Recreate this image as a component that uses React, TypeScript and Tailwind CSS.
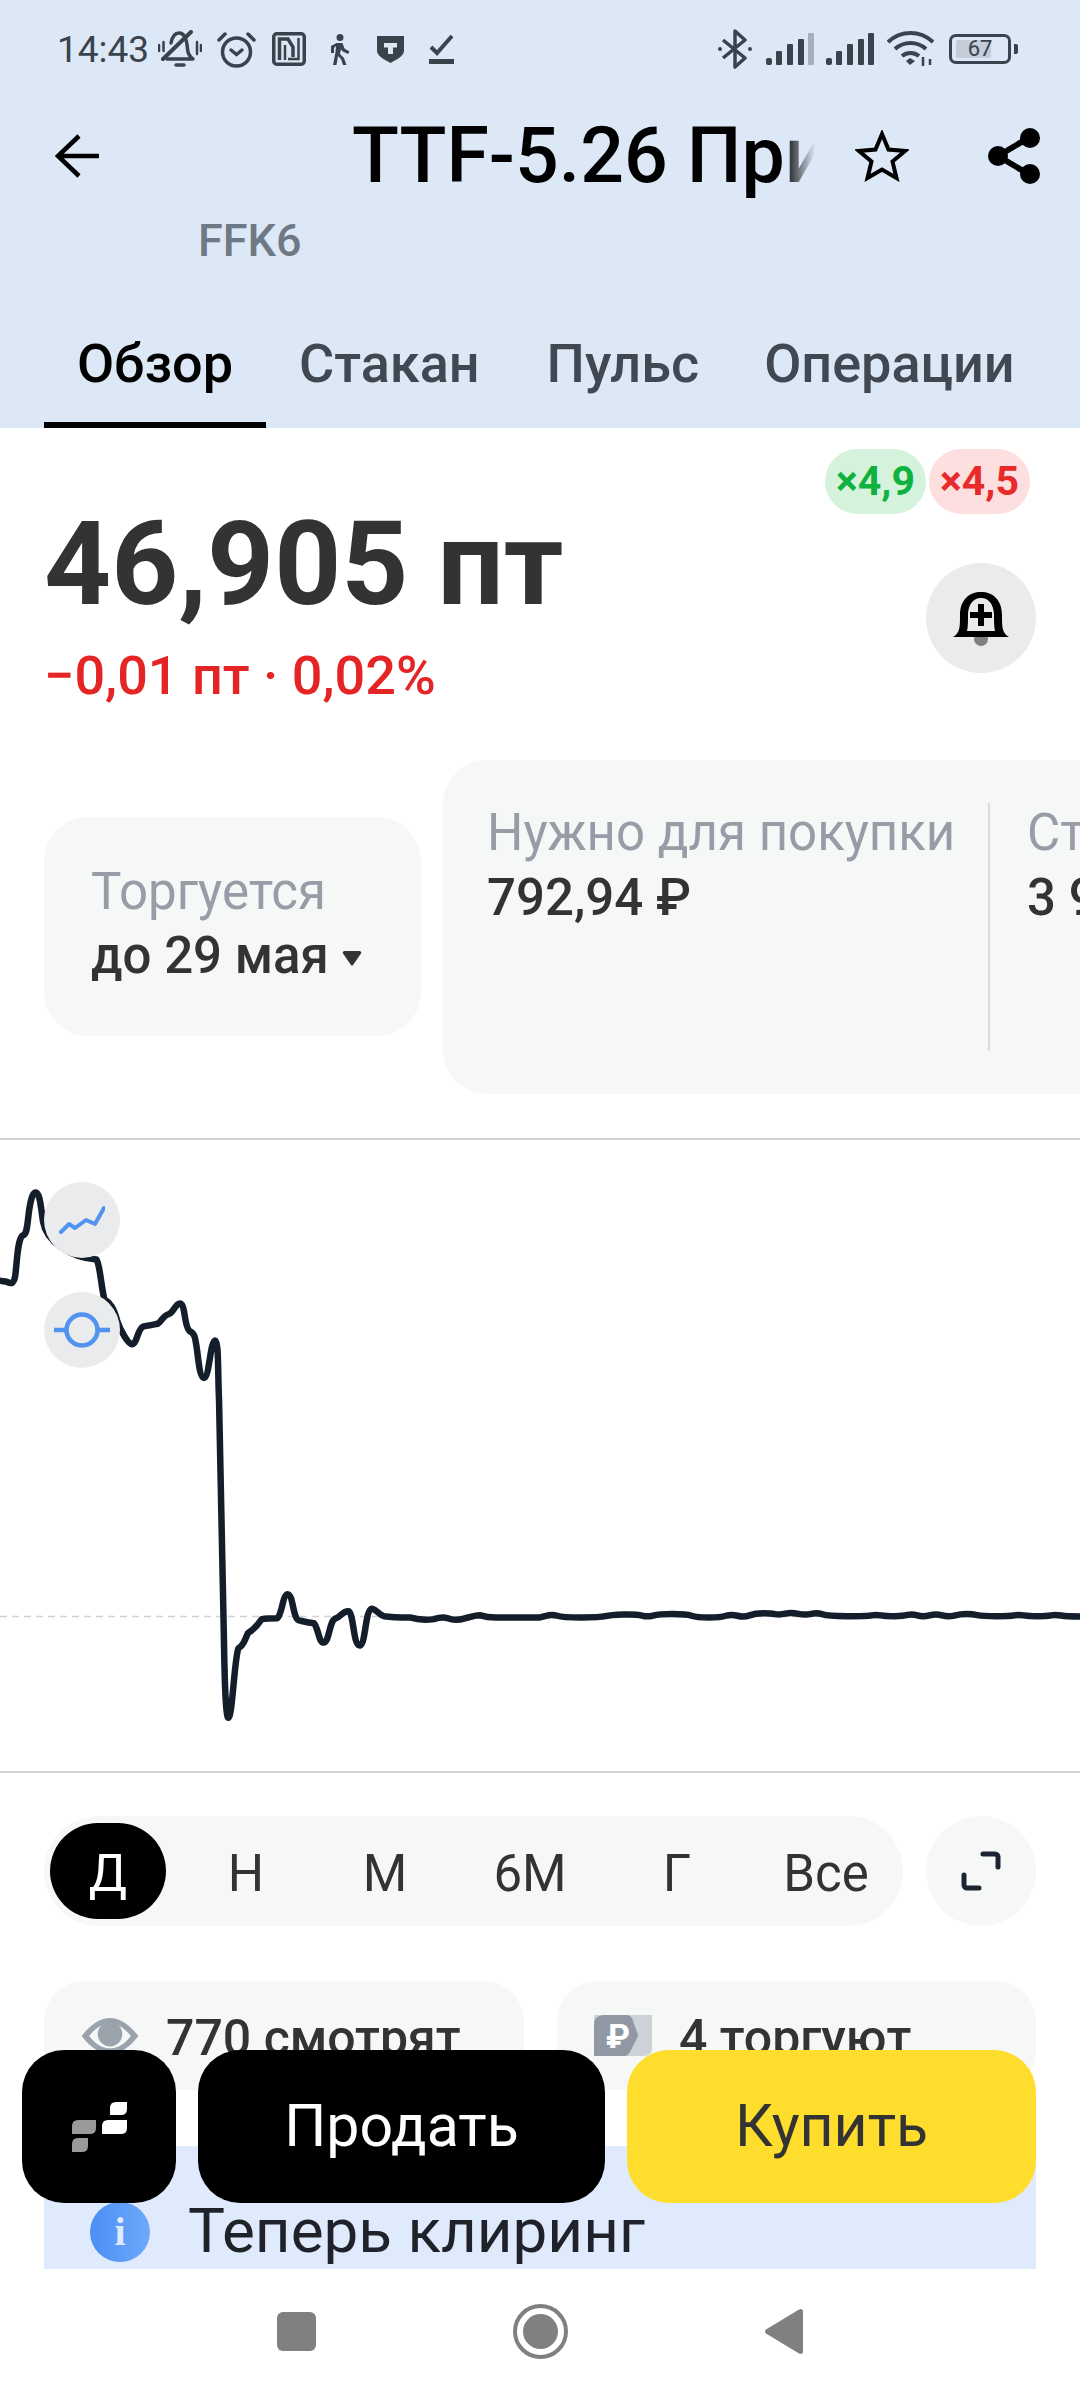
const flat: [number, number][] = [
  [1568, 1158], [1603, 1150], [1633, 1158], [1743, 1158], [1773, 1152], [1848, 1150], [1880, 1157], [1913, 1150],
  [1993, 1150], [2023, 1158], [2093, 1158], [2123, 1150], [2160, 1158], [2193, 1148], [2238, 1148], [2263, 1152],
  [2298, 1146], [2338, 1153], [2373, 1146], [2403, 1155], [2518, 1155], [2543, 1151], [2573, 1155], [2623, 1155],
  [2648, 1149], [2680, 1157], [2718, 1149], [2753, 1157], [2788, 1150], [2823, 1150], [2853, 1155], [2933, 1155],
  [2958, 1151], [2988, 1155], [3038, 1155], [3065, 1151], [3098, 1156], [3200, 1156], [3300, 1156],
];

function smooth(points: [number, number][]) {
  let d = "";
  for (let i = 0; i < points.length - 1; i++) {
    const [x, y] = points[i];
    const [nx, ny] = points[i + 1];
    d += ` Q ${x} ${y} ${(x + nx) / 2} ${(y + ny) / 2}`;
  }
  return d;
}

const chartLine =
  "M -5 355 L 20 358 C 35 365 40 360 44 345 C 50 310 50 260 65 248 C 80 245 78 225 85 185 C 92 150 98 145 104 145 " +
  "C 115 145 118 175 125 215 C 135 260 200 300 280 305 C 290 315 292 360 303 400 C 320 408 330 420 340 450 " +
  "C 350 475 372 507 384 507 C 398 505 400 470 415 465 C 430 462 445 460 458 458 C 472 450 475 437 490 435 " +
  "C 505 430 510 408 525 410 C 538 415 535 465 550 475 C 565 480 567 490 572 520 C 578 560 582 587 593 587 " +
  "C 608 585 610 500 625 498 C 635 500 632 560 636 640 C 640 800 645 1000 650 1200 C 652 1300 655 1397 663 1397 " +
  "C 675 1395 680 1260 692 1232 C 705 1225 710 1215 720 1195 C 735 1188 745 1180 760 1162 C 775 1160 790 1160 805 1160 " +
  "C 820 1150 820 1103 836 1103 C 852 1105 850 1160 868 1165 C 885 1168 895 1170 912 1172 C 925 1185 925 1218 940 1218 " +
  "C 958 1215 955 1165 975 1160 C 990 1157 995 1142 1012 1143 C 1028 1150 1025 1225 1045 1225 C 1062 1222 1060 1140 1080 1137 " +
  "C 1095 1140 1100 1152 1115 1155 C 1140 1158 1165 1158 1190 1158 C 1210 1163 1240 1164 1260 1162 C 1275 1158 1290 1157 1300 1160 " +
  "C 1315 1165 1335 1164 1350 1160 C 1365 1158 1380 1152 1395 1153 C 1410 1157 1420 1158 1440 1158 L 1568 1158" +
  smooth(flat);

const ranges = [
  { label: "Н", cls: "w-[160px]" },
  { label: "М", cls: "w-[118px]" },
  { label: "6М", cls: "w-[172px]" },
  { label: "Г", cls: "w-[122px]" },
  { label: "Все", cls: "w-[150px] ml-[13px]" },
];

function StatusIcons() {
  return (
    <div className="flex items-center text-[#3a424c]">
      {/* muted bell */}
      <svg width="44" height="38" viewBox="0 0 44 38" fill="none" stroke="currentColor" strokeWidth="3.500" strokeLinecap="round" className="ml-[9px]">
        <path d="M9 29h26c-3-2-5-5-5.500-10C29 12 27 3 21 3c-5 0-7 5-8 10" strokeLinejoin="round" />
        <path d="M5 29L33 2" strokeWidth="4" />
        <path d="M1 15v6M5.500 12v9M39 12v12M43 15v6" strokeWidth="2.500" />
        <path d="M18 35h8" strokeWidth="3.500" />
      </svg>
      {/* alarm */}
      <svg width="40" height="37" viewBox="0 0 40 37" fill="none" stroke="currentColor" strokeWidth="3.500" strokeLinecap="round" className="ml-[15px]">
        <circle cx="19.500" cy="21" r="14" />
        <path d="M2 9l6-6M37 9l-6-6" />
        <path d="M14 19l5.500 4.500L25 19" />
      </svg>
      {/* nfc */}
      <svg width="34" height="34" viewBox="0 0 34 34" fill="none" stroke="currentColor" strokeWidth="3.500" className="ml-[15px]">
        <rect x="1.750" y="1.750" width="30.500" height="30.500" rx="3" />
        <path d="M7.500 28V7h8.500l5 8v10" />
        <path d="M13 28V13M26.500 6v21H16" strokeWidth="2.500" />
      </svg>
      {/* walking */}
      <svg width="20" height="31" viewBox="0 0 20 31" fill="currentColor" className="ml-[24px]">
        <circle cx="10" cy="3.500" r="3.500" />
        <path d="M6.500 9h6l2 5.500 5 3-1.500 2.500-6-3-1-2-1 5 4 4 2.500 7h-3.500l-2-6-3-3-1.500 9H3l2.500-13 .5-6-2 2v5H1v-7z" />
      </svg>
      {/* shield */}
      <svg width="27" height="28" viewBox="0 0 27 28" className="ml-[27px]">
        <path d="M0 1h27v15c0 5-8 9-13.500 12C8 25 0 21 0 16z" fill="currentColor" />
        <path d="M7 8h13v4.500h-4v6.500h-5v-6.500H7z" fill="#dce8f6" />
      </svg>
      {/* task */}
      <svg width="25" height="30" viewBox="0 0 25 30" fill="none" stroke="currentColor" strokeWidth="4" className="ml-[25px]">
        <path d="M2 13l6 6L23 2" />
        <path d="M0 27.500h25" strokeWidth="5" />
      </svg>
    </div>
  );
}

function SignalIcon({ faded }: { faded?: boolean }) {
  return (
    <svg width="48" height="32" viewBox="0 0 48 32" fill="#3a424c">
      <rect x="0" y="25" width="6" height="7" rx="2" />
      <rect x="10" y="18" width="6" height="14" rx="1" />
      <rect x="21" y="11" width="6" height="21" rx="1" />
      <rect x="32" y="6" width="6" height="26" rx="1" />
      <rect x="42" y="0" width="6" height="32" rx="1" fill={faded ? "#a5aeb9" : "#3a424c"} />
    </svg>
  );
}

function StatusRight() {
  return (
    <div className="flex items-center text-[#3a424c]">
      <svg width="36" height="40" viewBox="0 0 36 40" fill="none" stroke="currentColor" strokeWidth="3.500" strokeLinejoin="round">
        <path d="M6 11l22 18-10 9V2l10 9L6 29" />
        <circle cx="3" cy="20" r="2" fill="currentColor" stroke="none" />
        <circle cx="33" cy="20" r="2" fill="currentColor" stroke="none" />
      </svg>
      <div className="ml-[13px]"><SignalIcon faded /></div>
      <div className="ml-[12px]"><SignalIcon /></div>
      <svg width="47" height="36" viewBox="0 0 47 36" fill="none" stroke="currentColor" strokeWidth="4" className="ml-[13px]">
        <path d="M1 11c13-12 32-12 45 0" />
        <path d="M8 18c9-8 22-8 31 0" />
        <path d="M15 25c5-4 12-4 17 0" />
        <path d="M19 30l4-3 5 3-5 4z" fill="currentColor" stroke="none" />
        <path d="M36 26v9M43 28v6" strokeWidth="2.500" />
      </svg>
      <div className="ml-[15px] flex items-center">
        <div className="relative w-[62px] h-[30px] rounded-[7px] border-[3px] border-[#3a424c] text-[22px] leading-[24px] text-center">
          <div className="absolute left-[4px] top-[3px] bottom-[3px] w-[35px] rounded-[2px] bg-[#c3ccd8]" />
          <span className="relative">67</span>
        </div>
        <div className="ml-[3px] w-[4px] h-[10px] rounded-r-[2px] bg-[#3a424c]" />
      </div>
    </div>
  );
}

function Header() {
  return (
    <header className="h-[428px] bg-[#dce8f6] flex flex-col">
      <div className="h-[98px] pl-[57px] pr-[62px] flex items-center justify-between shrink-0">
        <div className="flex items-center">
          <span className="text-[37px] text-[#3a424c] leading-none">14:43</span>
          <StatusIcons />
        </div>
        <StatusRight />
      </div>

      <div className="mt-[9px] h-[98px] pl-[55px] flex items-center shrink-0">
        <svg width="44" height="44" viewBox="0 0 44 44" fill="none" stroke="#000" strokeWidth="4.500">
          <path d="M44 22H3M24 2L3 22l21 20" />
        </svg>
        <div className="ml-[253px] w-[463px] overflow-hidden whitespace-nowrap text-[77px] leading-[98px] font-medium text-black [mask-image:linear-gradient(to_right,black_93%,transparent)]">
          TTF-5.26 Природный газ
        </div>
        <svg width="54" height="52" viewBox="0 0 54 52" fill="none" stroke="#000" strokeWidth="4" className="ml-[40px]">
          <path d="M27 4l6.500 15.500L50 21 37.500 31.500 41.500 48 27 39.500 12.500 48 16.500 31.500 4 21l16.500-1.500z" />
        </svg>
        <svg width="52" height="56" viewBox="0 0 52 56" className="ml-[79px]">
          <path d="M10 28L42 9M10 28l32 19" stroke="#000" strokeWidth="6" />
          <circle cx="10" cy="28" r="10" />
          <circle cx="42" cy="10" r="10" />
          <circle cx="42" cy="46" r="10" />
        </svg>
      </div>

      <div className="pl-[198px] text-[45px] leading-[52px] font-medium text-[#6f7985] mt-[10px]">FFK6</div>

      <nav className="mt-auto h-[99px] pl-[44px] flex text-[54px] leading-[70px] font-medium text-[#414852]">
        <div className="w-[222px] border-b-[6px] border-black text-black text-center">Обзор</div>
        <div className="ml-[33px]">Стакан</div>
        <div className="ml-[67px]">Пульс</div>
        <div className="ml-[65px]">Операции</div>
      </nav>
    </header>
  );
}

function PriceBlock() {
  return (
    <section className="h-[332px] pl-[44px] pr-[44px] flex justify-between">
      <div>
        <div className="pt-[78px] text-[117px] leading-[116px] font-bold text-[#333333] whitespace-nowrap">46,905 пт</div>
        <div className="mt-[24px] text-[54px] leading-[60px] font-medium text-[#e52525]">−0,01 пт · 0,02%</div>
      </div>
      <div className="flex flex-col items-end">
        <div className="mt-[21px] mr-[6px] flex gap-[3px] text-[41px] font-bold">
          <span className="w-[101px] h-[65px] rounded-full bg-[#d5f3dc] text-[#10b23f] flex items-center justify-center">×4,9</span>
          <span className="w-[101px] h-[65px] rounded-full bg-[#fddfe0] text-[#e92a2a] flex items-center justify-center">×4,5</span>
        </div>
        <div className="mt-[49px] w-[110px] h-[110px] rounded-full bg-[#e9ebed] flex items-center justify-center">
          <svg width="56" height="56" viewBox="0 0 56 56">
            <circle cx="28" cy="49" r="7" fill="#808080" />
            <path d="M0 47c7-4 7-10 7-22C7 10 16 2 28 2s21 8 21 23c0 12 0 18 7 22z" fill="#000" />
            <path d="M14 41c1-4 1-10 1-16 0-10 5-17 13-17s13 7 13 17c0 6 0 12 1 16z" fill="#e9ebed" />
            <path d="M25 14h6v8h8v6h-8v8h-6v-8h-8v-6h8z" fill="#000" />
          </svg>
        </div>
      </div>
    </section>
  );
}

function InfoCards() {
  return (
    <section className="h-[378px] pl-[44px] flex items-start gap-[22px] overflow-hidden">
      <div className="mt-[57px] w-[377px] h-[219px] shrink-0 rounded-[44px] bg-[#f6f8f8] pl-[47px] pt-[43px] text-[51px] leading-[64px]">
        <div className="text-[#979ca6]">Торгуется</div>
        <div className="flex items-center font-medium text-[#333333]">
          до 29 мая
          <svg width="20" height="15" viewBox="0 0 20 15" className="ml-[13px] mt-[4px]">
            <path d="M1 2.500Q0 0 3 0h14q3 0 2 2.500L11 14q-1 1-2 0z" fill="#333333" />
          </svg>
        </div>
      </div>
      <div className="w-[700px] h-[334px] shrink-0 rounded-[44px] bg-[#f6f8f8] py-[43px] pl-[44px] flex text-[51px] leading-[65px]">
        <div className="w-[503px] border-r-[2px] border-[#d8dadc] shrink-0">
          <div className="-mt-[3px]">
            <div className="text-[#979ca6]">Нужно для покупки</div>
            <div className="font-medium text-[#333333]">792,94 ₽</div>
          </div>
        </div>
        <div className="-mt-[3px] pl-[37px] whitespace-nowrap">
          <div className="text-[#979ca6]">Стоимость</div>
          <div className="font-medium text-[#333333]">3 964,7 ₽</div>
        </div>
      </div>
    </section>
  );
}

function Chart() {
  return (
    <section className="relative h-[635px] border-y-[2px] border-[#d3d5d7]">
      <svg className="block w-full h-full" viewBox="0 20 3136 1504" preserveAspectRatio="none" fill="none">
        <path d="M0 1156H3136" stroke="#cfd1d3" strokeWidth="1.500" strokeDasharray="7 5" vectorEffect="non-scaling-stroke" />
        <path d={chartLine} stroke="#141e2b" strokeWidth="6.500" strokeLinejoin="round" vectorEffect="non-scaling-stroke" />
      </svg>
      <div className="absolute left-[44px] top-[42px] w-[76px] h-[76px] rounded-full bg-[#e9ebed] flex items-center justify-center">
        <svg width="46" height="30" viewBox="0 0 46 30" fill="none" stroke="#5193ef" strokeWidth="4" strokeLinecap="round" strokeLinejoin="round">
          <path d="M2 27l8-8 6 4 11-8 9 4L45 3" />
        </svg>
      </div>
      <div className="absolute left-[44px] top-[152px] w-[76px] h-[76px] rounded-full bg-[#e9ebed] flex items-center justify-center">
        <svg width="56" height="36" viewBox="0 0 56 36" fill="none" stroke="#5193ef" strokeWidth="4.500">
          <circle cx="28" cy="18" r="15.500" />
          <path d="M0 18h12M44 18h12" />
        </svg>
      </div>
    </section>
  );
}

function RangeRow() {
  return (
    <section className="mt-[43px] px-[44px] flex gap-[23px] text-[51px] text-[#333333]">
      <div className="flex-1 h-[110px] pl-[6px] rounded-full bg-[#f6f8f8] flex items-center">
        <div className="w-[116px] h-[96px] pt-[6px] rounded-full bg-black text-white flex items-center justify-center">Д</div>
        {ranges.map((r) => (
          <div key={r.label} className={`${r.cls} pt-[6px] text-center`}>{r.label}</div>
        ))}
      </div>
      <div className="w-[110px] h-[110px] rounded-full bg-[#f6f8f8] flex items-center justify-center">
        <svg width="40" height="40" viewBox="0 0 40 40" fill="none" stroke="#1a2433" strokeWidth="5" strokeLinecap="round" strokeLinejoin="round">
          <path d="M22 3h12a3 3 0 0 1 3 3v10M3 24v10a3 3 0 0 0 3 3h12" />
        </svg>
      </div>
    </section>
  );
}

function Stats() {
  return (
    <section className="mt-[55px] px-[44px] flex gap-[33px] text-[50px] font-medium text-[#333333]">
      <div className="w-[480px] h-[109px] rounded-[40px] bg-[#f6f8f8] pl-[36px] flex items-center gap-[26px]">
        <svg width="60" height="36" viewBox="0 0 60 38">
          <path d="M0 19C10 6 20 0 30 0s20 6 30 19C50 32 40 38 30 38S10 32 0 19z" fill="#9aa2ab" />
          <path d="M8 19C15 10 22 6 30 6s15 4 22 13c-7 9-14 13-22 13S15 28 8 19z" fill="#f6f8f8" />
          <circle cx="30" cy="17" r="13" fill="#9aa2ab" />
        </svg>
        <span className="pt-[6px]">770 смотрят</span>
      </div>
      <div className="w-[479px] h-[109px] rounded-[40px] bg-[#f6f8f8] pl-[37px] flex items-center gap-[27px]">
        <svg width="58" height="41" viewBox="0 0 58 41">
          <path d="M0 0h58v33q0 8-8 8H0z" fill="#cdd2d9" />
          <path d="M10 0h23q3 0 5 3l5 14q2 3 0 6l-7 14q-2 4-6 4H0V10Q0 0 10 0z" fill="#8f98a3" />
          <text x="12" y="33" fontSize="34" fontWeight="700" fill="#fff">₽</text>
        </svg>
        <span className="pt-[6px]">4 торгуют</span>
      </div>
    </section>
  );
}

function Notice() {
  return (
    <section className="mt-[56px] mx-[44px] h-[123px] bg-[#dfeafd] pl-[46px] pt-[50px] flex items-start gap-[38px]">
      <div className="w-[60px] h-[60px] mt-[6px] rounded-full bg-linear-to-r from-[#4a8ff5] to-[#6ea9fa] flex items-center justify-center text-[40px] leading-none font-bold text-[#dfeafd] [font-family:'Liberation_Serif',serif]">i</div>
      <div className="text-[62px] leading-[70px] text-[#1f2329]">Теперь клиринг</div>
    </section>
  );
}

function NavBar() {
  return (
    <div className="h-[124px] flex items-center justify-center gap-[197px]">
      <div className="w-[39px] h-[39px] rounded-[6px] bg-[#808080]" />
      <div className="w-[55px] h-[55px] rounded-full border-[4px] border-[#808080] flex items-center justify-center">
        <div className="w-[35px] h-[35px] rounded-full bg-[#808080]" />
      </div>
      <svg width="38" height="45" viewBox="0 0 38 45">
        <path d="M1 24.500Q-1 22.500 1 20.500L34 0.500Q38 -1 38 3V42Q38 46 34 44.500z" fill="#808080" />
      </svg>
    </div>
  );
}

export default function App() {
  return (
    <div className="relative w-[1080px] h-[2400px] overflow-hidden bg-white [font-family:Roboto,sans-serif]">
      <Header />
      <PriceBlock />
      <InfoCards />
      <Chart />
      <RangeRow />
      <Stats />
      <Notice />
      <NavBar />

      {/* floating trade buttons */}
      <div className="absolute left-[22px] right-[44px] top-[2050px] h-[153px] flex gap-[22px] text-[59px]">
        <div className="w-[154px] rounded-[42px] bg-black flex items-center justify-center">
          <svg width="55" height="50" viewBox="0 0 55 50">
            <path d="M44 0H55V7Q55 13 49 13H38V6Q38 0 44 0z" fill="#fff" />
            <path d="M36 18H55V26Q55 32 49 32H30V24Q30 18 36 18z" fill="#fff" />
            <path d="M6 18H24V26Q24 32 18 32H0V24Q0 18 6 18z" fill="#9a9a9a" />
            <path d="M6 36H16V44Q16 50 10 50H0V42Q0 36 6 36z" fill="#9a9a9a" />
          </svg>
        </div>
        <div className="w-[407px] rounded-[42px] bg-black text-white flex items-center justify-center">Продать</div>
        <div className="flex-1 rounded-[42px] bg-[#ffdd2d] text-[#333333] flex items-center justify-center">Купить</div>
      </div>
    </div>
  );
}
